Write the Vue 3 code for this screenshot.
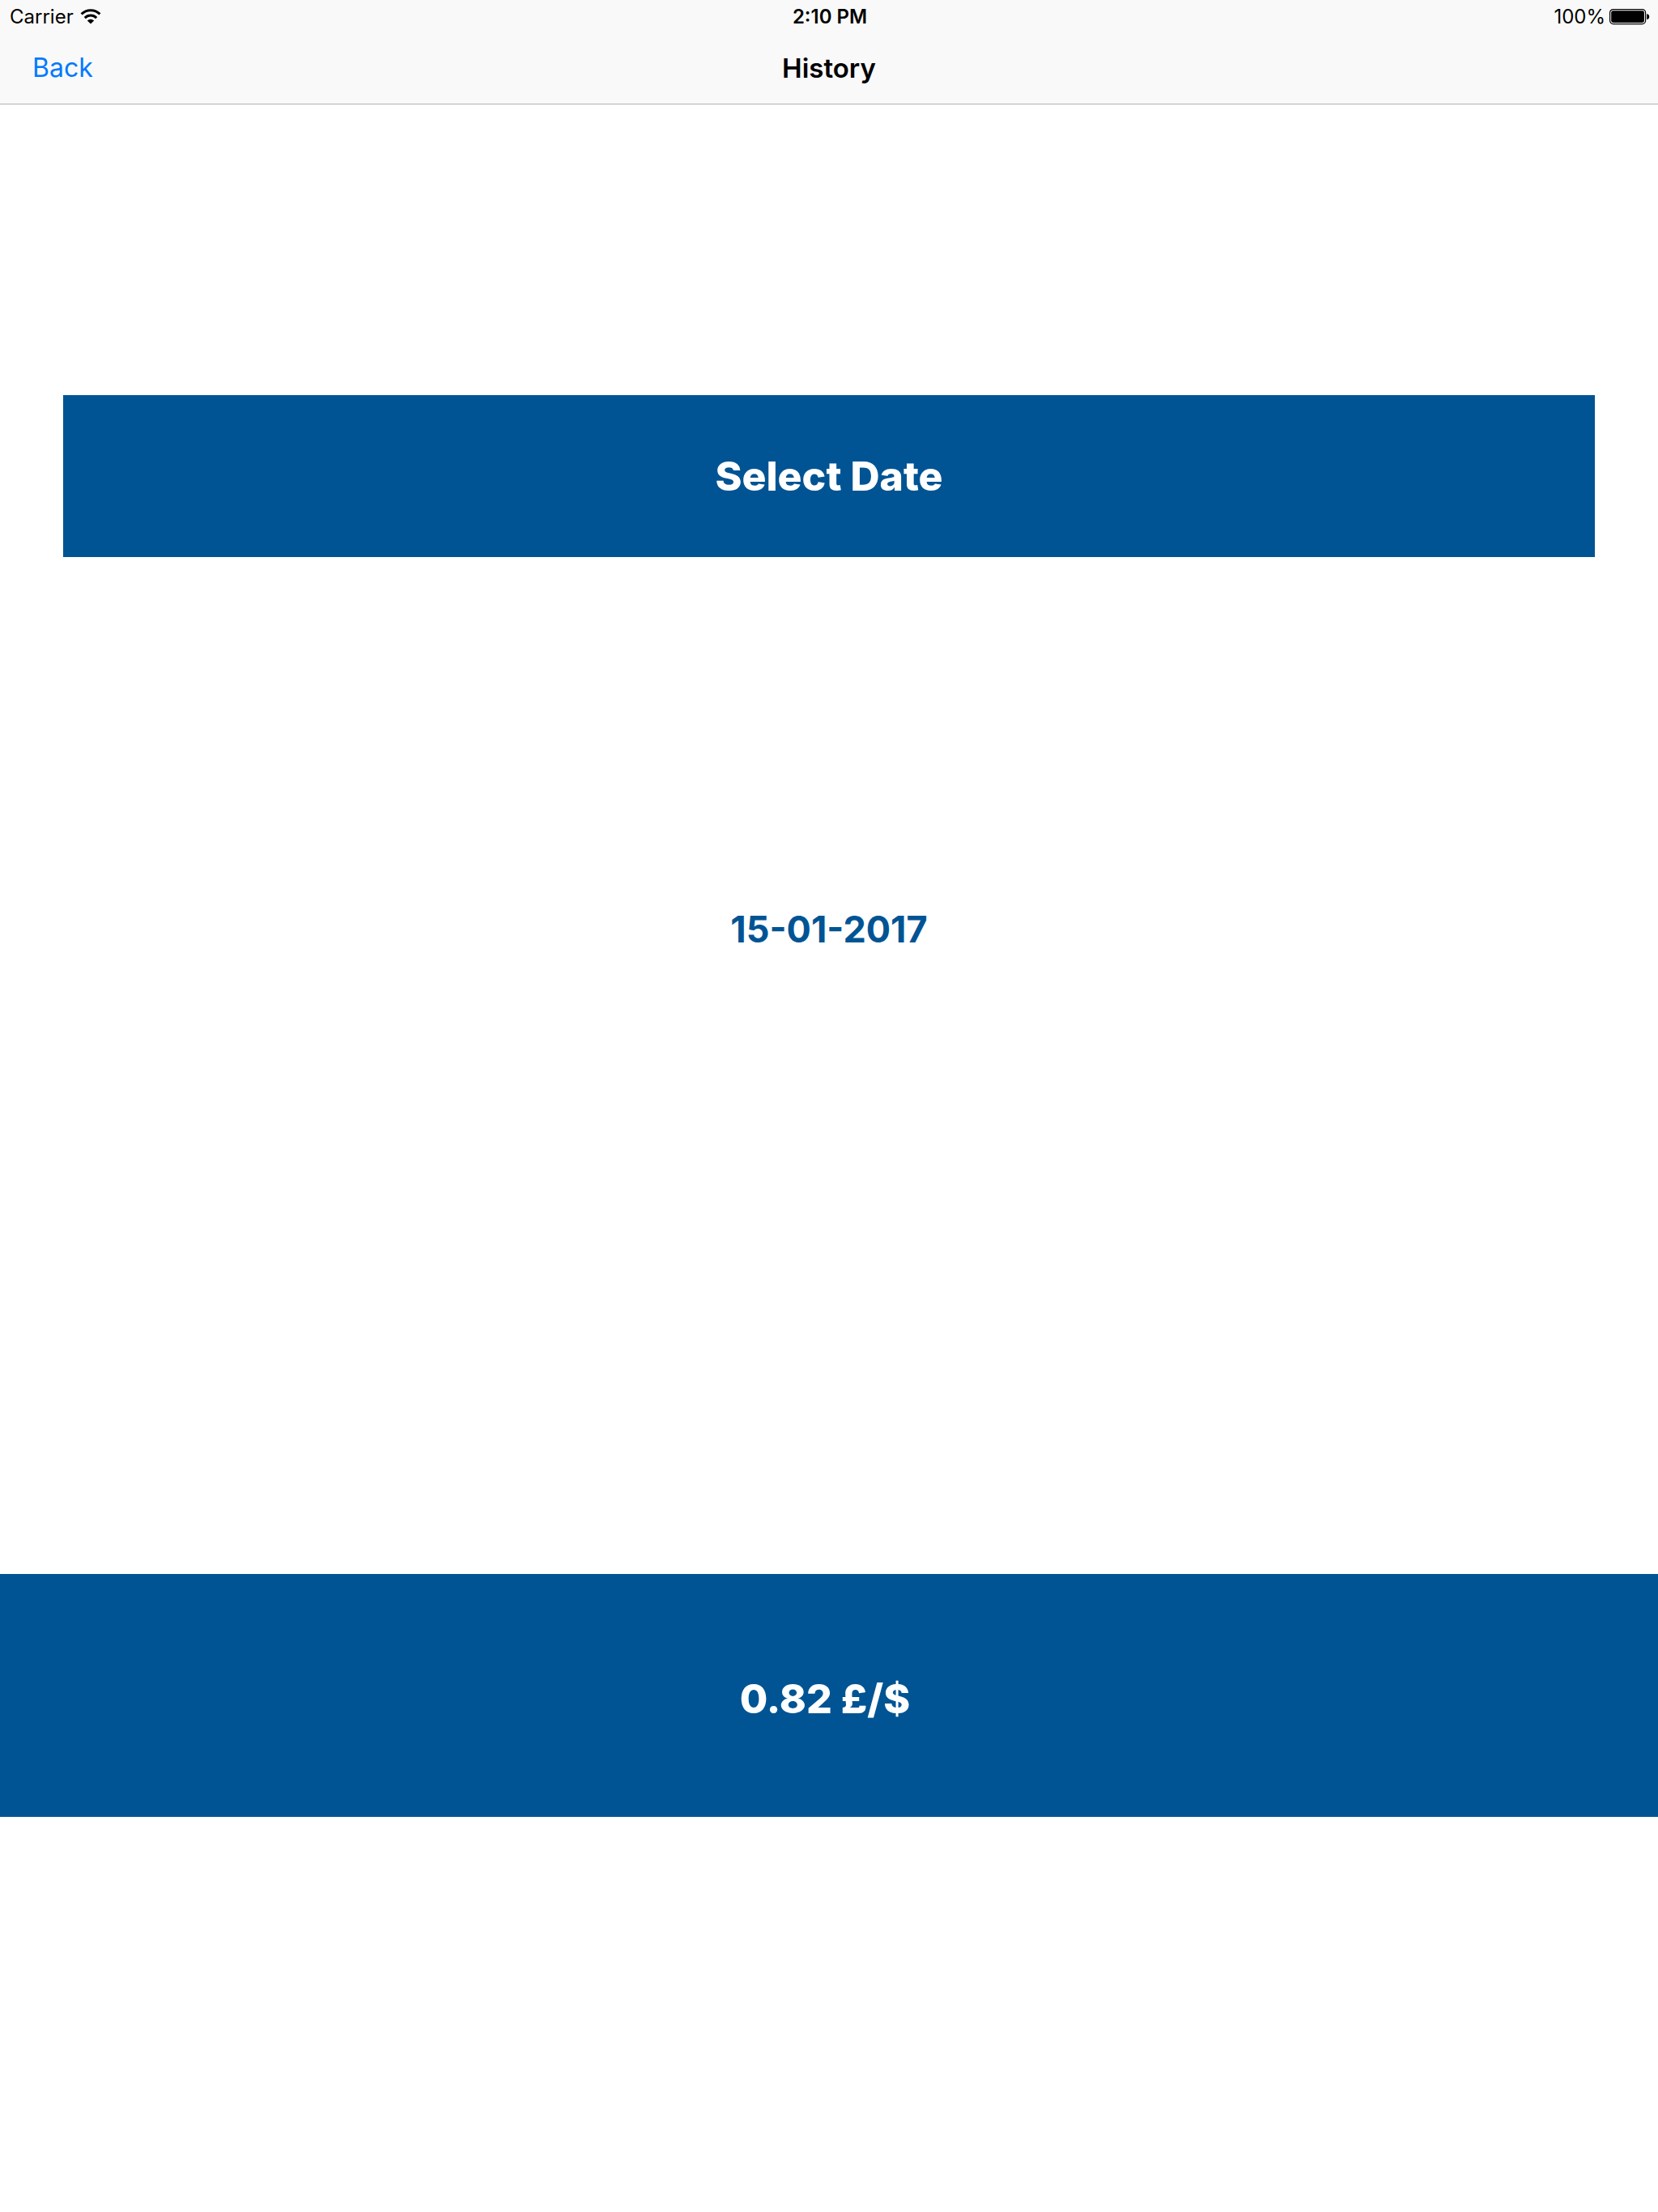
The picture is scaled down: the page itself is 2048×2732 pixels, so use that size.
<template>
  <div class="page">
    <header class="top">
      <!-- status bar -->
      <div class="status-bar">
        <div class="status-left">
          <span>{{ carrier }}</span>
          <svg class="wifi" viewBox="0 0 26 20" aria-hidden="true">
            <path d="M1.6 6.4a16.2 16.2 0 0 1 22.8 0" fill="none" stroke="#000" stroke-width="3" />
            <path d="M5.8 11.1a10.2 10.2 0 0 1 14.4 0" fill="none" stroke="#000" stroke-width="3" />
            <path d="M8.8 14.4a6 6 0 0 1 8.4 0L13 18.6z" fill="#000" />
          </svg>
        </div>
        <span class="time">{{ time }}</span>
        <div class="status-right">
          <span>{{ battery }}%</span>
          <svg class="battery" viewBox="0 0 50 20" aria-hidden="true">
            <rect x="0.6" y="0.6" width="44" height="18" rx="4" fill="none" stroke="#000" stroke-width="1.2" />
            <rect x="2.2" y="2.2" width="40.8" height="14.8" rx="2.4" fill="#000" />
            <path d="M46.2 6.2c2 0 3 1.4 3 3.4s-1 3.4-3 3.4z" fill="#000" />
          </svg>
        </div>
      </div>

      <!-- navigation bar -->
      <nav class="nav-bar">
        <button type="button" class="back">Back</button>
        <h1 class="title">History</h1>
      </nav>
    </header>

    <main class="content">
      <button type="button" class="select-date">Select Date</button>
      <p class="date">{{ selectedDate }}</p>
      <div class="rate">{{ rate.toFixed(2) }} £/$</div>
    </main>
  </div>
</template>

<script setup>
import { ref } from 'vue'

const carrier = ref('Carrier')
const time = ref('2:10 PM')
const battery = ref(100)

const selectedDate = ref('15-01-2017')
const rate = ref(0.82)
</script>

<style>
body {
  margin: 0;
  background: #fff;
}
</style>

<style scoped>
.page {
  min-height: 100vh;
  background: #fff;
  color: #000;
  font-family: Inter, "Liberation Sans", sans-serif;
}

.top {
  background: #f9f9f9;
  border-bottom: 1px solid #b2b2b2;
}

.status-bar {
  display: grid;
  grid-template-columns: 1fr auto 1fr;
  align-items: center;
  height: 42px;
  padding: 0 10px 0 12px;
  font-size: 24px;
  line-height: 42px;
}

.status-left,
.status-right {
  display: flex;
  align-items: center;
}

.status-left {
  gap: 8px;
}

.status-right {
  justify-content: flex-end;
  gap: 5px;
}

.time {
  font-weight: 600;
}

.wifi {
  width: 26px;
  height: 20px;
}

.battery {
  width: 50px;
  height: 20px;
}

.nav-bar {
  display: grid;
  grid-template-columns: 1fr auto 1fr;
  align-items: center;
  padding: 20px 40px 22px;
}

.back {
  justify-self: start;
  padding: 0;
  border: none;
  background: none;
  color: #007aff;
  font-family: inherit;
  font-size: 32px;
  line-height: 44px;
  cursor: pointer;
}

.title {
  margin: 0;
  font-size: 33px;
  line-height: 44px;
  font-weight: 600;
}

.content {
  display: flex;
  flex-direction: column;
  padding-top: 359px;
}

.select-date {
  margin: 0 78px;
  padding: 70px 0;
  border: none;
  background: #005494;
  color: #fff;
  font-family: inherit;
  font-size: 50px;
  line-height: 60px;
  font-weight: 800;
  cursor: pointer;
}

.date {
  margin: 430px 0 766px;
  color: #005494;
  font-size: 45px;
  line-height: 60px;
  font-weight: 700;
  text-align: center;
}

.rate {
  padding: 124px 10px 116px 0;
  background: #005494;
  color: #fff;
  font-size: 50px;
  line-height: 60px;
  font-weight: 800;
  text-align: center;
}
</style>
